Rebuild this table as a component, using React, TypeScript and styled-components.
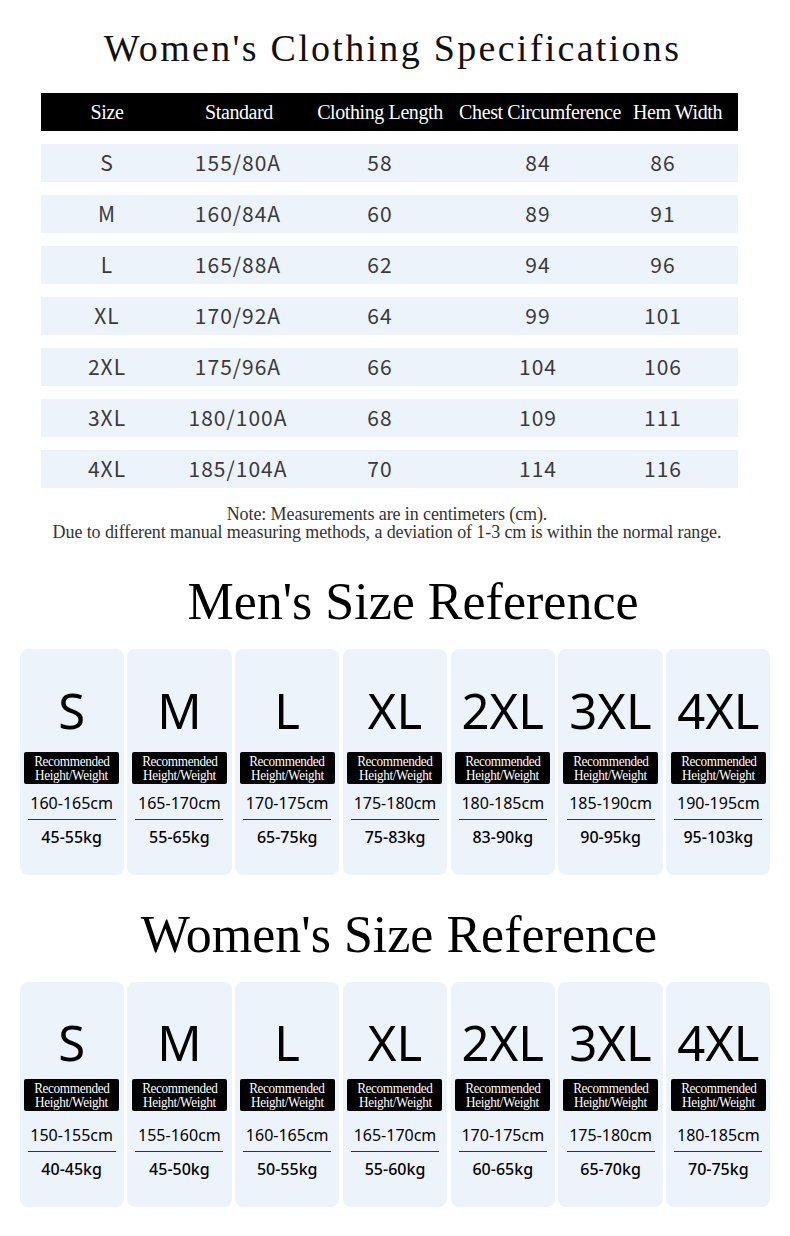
import styled, { createGlobalStyle } from "styled-components";

const GlobalStyle = createGlobalStyle`
  body {
    margin: 0;
    background: #fff;
  }
`;

const specRows = [
  ["S", "155/80A", "58", "84", "86"],
  ["M", "160/84A", "60", "89", "91"],
  ["L", "165/88A", "62", "94", "96"],
  ["XL", "170/92A", "64", "99", "101"],
  ["2XL", "175/96A", "66", "104", "106"],
  ["3XL", "180/100A", "68", "109", "111"],
  ["4XL", "185/104A", "70", "114", "116"],
];

const menSizes = [
  ["S", "160-165cm", "45-55kg"],
  ["M", "165-170cm", "55-65kg"],
  ["L", "170-175cm", "65-75kg"],
  ["XL", "175-180cm", "75-83kg"],
  ["2XL", "180-185cm", "83-90kg"],
  ["3XL", "185-190cm", "90-95kg"],
  ["4XL", "190-195cm", "95-103kg"],
];

const womenSizes = [
  ["S", "150-155cm", "40-45kg"],
  ["M", "155-160cm", "45-50kg"],
  ["L", "160-165cm", "50-55kg"],
  ["XL", "165-170cm", "55-60kg"],
  ["2XL", "170-175cm", "60-65kg"],
  ["3XL", "175-180cm", "65-70kg"],
  ["4XL", "180-185cm", "70-75kg"],
];

const SizeCards = ({ sizes, tight }: { sizes: string[][]; tight?: boolean }) => (
  <CardGrid>
    {sizes.map(([size, height, weight]) => (
      <Card key={size} $tight={tight}>
        <BigSize>{size}</BigSize>
        <Badge $tight={tight}>
          <BadgeText>Recommended</BadgeText>
          <BadgeText>Height/Weight</BadgeText>
        </Badge>
        <Range $tight={tight}>{height}</Range>
        <Divider />
        <Range $weight>{weight}</Range>
      </Card>
    ))}
  </CardGrid>
);

const App = () => {
  return (
    <Page>
      <GlobalStyle />
      <Title>Women's Clothing Specifications</Title>
      <Table>
        <HeadRow>
          <HeadCell>Size</HeadCell>
          <HeadCell>Standard</HeadCell>
          <HeadCell>Clothing Length</HeadCell>
          <HeadCell>Chest Circumference</HeadCell>
          <HeadCell>Hem Width</HeadCell>
        </HeadRow>
        {specRows.map((row) => (
          <Row key={row[0]}>
            {row.map((v, i) => (
              <Cell key={i}>{v}</Cell>
            ))}
          </Row>
        ))}
      </Table>
      <Note>
        Note: Measurements are in centimeters (cm).
        <br />
        Due to different manual measuring methods, a deviation of 1-3 cm is within the normal range.
      </Note>
      <Heading $shift={36}>Men's Size Reference</Heading>
      <SizeCards sizes={menSizes} tight />
      <Heading $shift={8} $women>Women's Size Reference</Heading>
      <SizeCards sizes={womenSizes} />
    </Page>
  );
};

const Page = styled.div`
  width: 790px;
  padding-top: 25px;
  padding-bottom: 28px;
  display: flex;
  flex-direction: column;
  align-items: center;
`
const Title = styled.h1`
  margin: 0 5px 0 0;
  font-family: "Liberation Serif", serif;
  font-weight: normal;
  font-size: 38px;
  line-height: 46px;
  letter-spacing: 2.3px;
  color: #111;
`
const Table = styled.div`
  align-self: flex-start;
  margin-left: 41px;
  width: 697px;
  margin-top: 22px;
  display: flex;
  flex-direction: column;
  gap: 13px;
`
const HeadRow = styled.div`
  display: grid;
  grid-template-columns: 132px 132px 150px 170px 105px;
  height: 38px;
  align-items: center;
  background: #000;
`
const HeadCell = styled.div`
  text-align: center;
  font-family: "Liberation Serif", serif;
  font-size: 20px;
  color: #fff;
  white-space: nowrap;
  letter-spacing: -0.4px;
`
const Row = styled.div`
  display: grid;
  grid-template-columns: 132px 130px 154px 162px 88px;
  height: 38px;
  align-items: center;
  background: #edf3fb;
`
const Cell = styled.div`
  text-align: center;
  font-family: "Noto Sans CJK SC", "Noto Sans", sans-serif;
  font-size: 21px;
  letter-spacing: 1px;
  color: #3a3a3a;
  margin-top: -2px;
`
const Note = styled.p`
  margin: 17px 16px 0 0;
  text-align: center;
  font-family: "Liberation Serif", serif;
  font-size: 18px;
  line-height: 18px;
  color: #333;
  letter-spacing: -0.1px;
`
const Heading = styled.h2<{ $women?: boolean; $shift: number }>`
  margin: ${(p) => (p.$women ? "32px" : "33px")} 0 0 ${(p) => p.$shift}px;
  font-family: "Liberation Serif", serif;
  font-weight: normal;
  font-size: 52px;
  line-height: 56px;
  color: #000;
`
const CardGrid = styled.div`
  width: 751px;
  margin-top: 19px;
  display: grid;
  grid-template-columns: repeat(7, 1fr);
  gap: 3.5px;
`
const Card = styled.div<{ $tight?: boolean }>`
  height: ${(p) => (p.$tight ? "226px" : "225px")};
  box-sizing: border-box;
  padding-top: ${(p) => (p.$tight ? "31px" : "30px")};
  border-radius: 8px;
  background: #edf3fb;
  display: flex;
  flex-direction: column;
  align-items: center;
`
const BigSize = styled.div`
  font-family: "Noto Sans", sans-serif;
  font-size: 49px;
  line-height: 60px;
  color: #000;
  white-space: nowrap;
`
const Badge = styled.div<{ $tight?: boolean }>`
  margin-top: ${(p) => (p.$tight ? "12px" : "7px")};
  width: 95px;
  height: 32px;
  border-radius: 2px;
  background: #000;
  display: flex;
  flex-direction: column;
  align-items: center;
  justify-content: center;
`
const BadgeText = styled.span`
  display: block;
  font-family: "Liberation Serif", serif;
  font-size: 15px;
  line-height: 14px;
  letter-spacing: -0.4px;
  white-space: nowrap;
  color: #fff;
  transform: scaleX(0.88);
`
const Range = styled.div<{ $tight?: boolean; $weight?: boolean }>`
  margin-top: ${(p) => (p.$weight ? "7px" : p.$tight ? "9px" : "14px")};
  font-family: "Noto Sans", sans-serif;
  font-size: 16px;
  line-height: 20px;
  font-weight: ${(p) => (p.$weight ? 500 : 400)};
  color: #000;
  white-space: nowrap;
`
const Divider = styled.div`
  margin-top: 6px;
  width: 88px;
  height: 1px;
  background: #333;
`

export default App;
